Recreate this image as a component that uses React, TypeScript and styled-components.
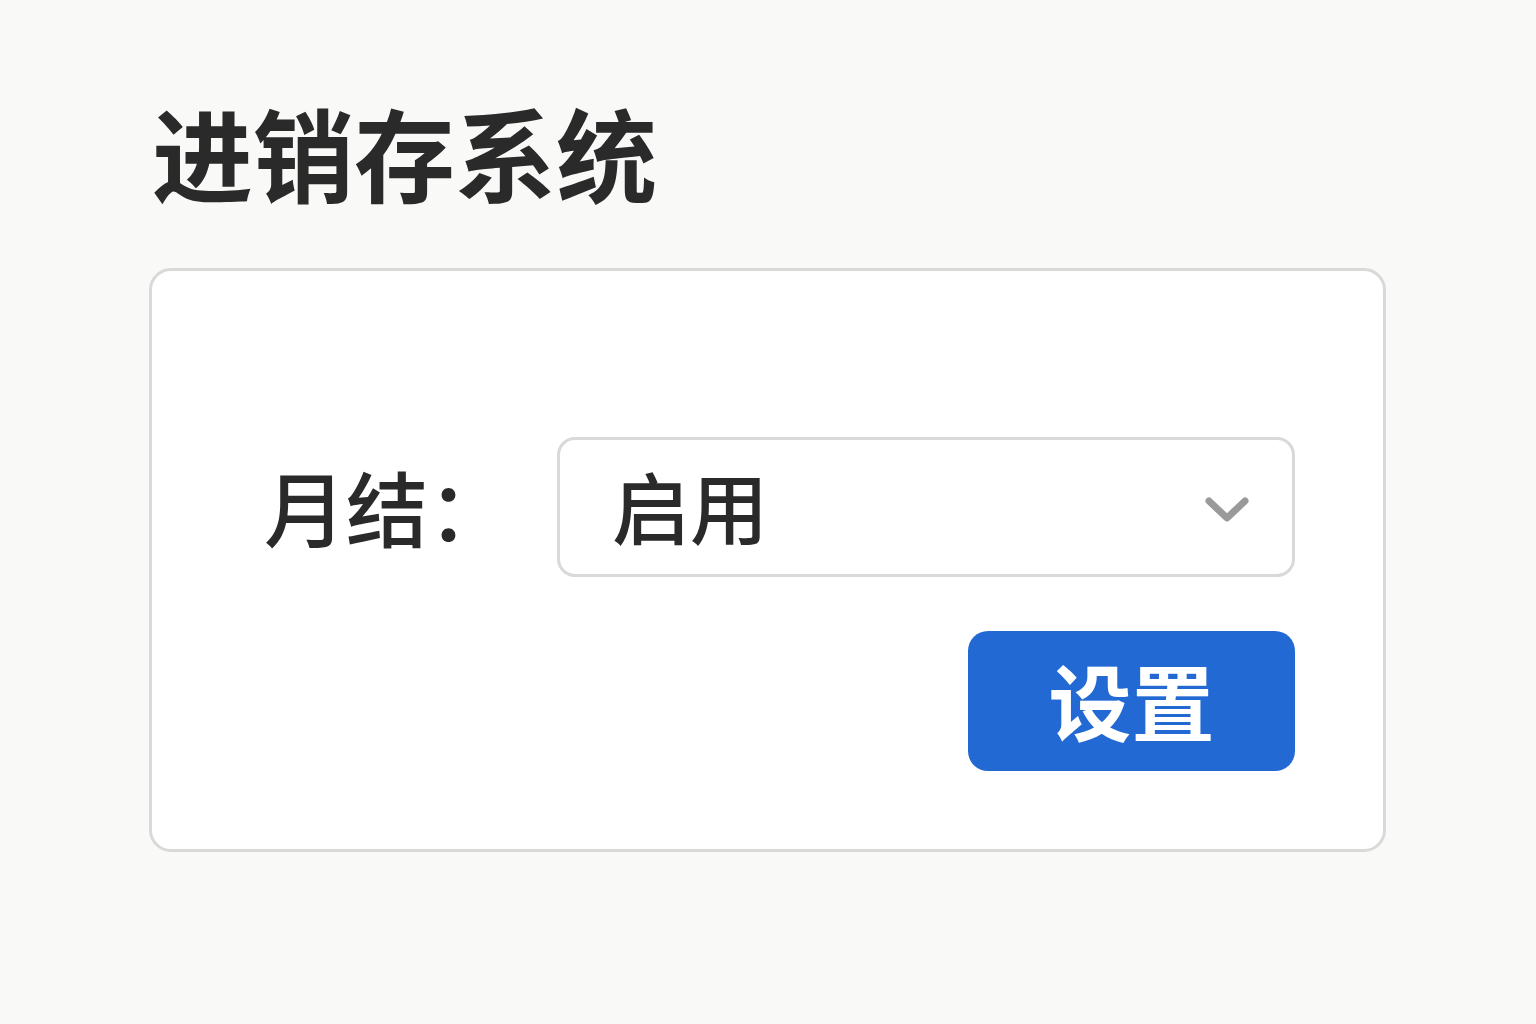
import styled, { createGlobalStyle } from "styled-components";

const GlobalStyle = createGlobalStyle`
  html, body {
    margin: 0;
    padding: 0;
    background: #f9f9f7;
  }
  body {
    font-family: "Noto Sans CJK SC", "Noto Sans", sans-serif;
    color: #2a2a2a;
  }
`;

const Page = styled.div`
  width: 1536px;
  height: 1024px;
  box-sizing: border-box;
  padding: 89px 0 0 149px;
`;

const Title = styled.h1`
  margin: 0 0 55px 3px;
  font-size: 101px;
  line-height: 124px;
  font-weight: 700;
  color: #2a2a2a;
`;

const Card = styled.div`
  width: 1237px;
  height: 584px;
  box-sizing: border-box;
  background: #ffffff;
  border: 3px solid #d9d9d9;
  border-radius: 22px;
  padding: 166px 88px 0 112px;
  display: grid;
  grid-template-columns: 293px 1fr;
  grid-template-rows: 140px auto;
  row-gap: 54px;
`;

const Label = styled.div`
  display: flex;
  align-items: center;
  font-size: 82px;
  font-weight: 500;
  color: #2a2a2a;
  padding-bottom: 4px;
`;

const Select = styled.div`
  box-sizing: border-box;
  height: 140px;
  border: 3px solid #d9d9d9;
  border-radius: 18px;
  display: flex;
  align-items: center;
  justify-content: space-between;
  padding: 0 42px 0 52px;
  font-size: 78px;
  font-weight: 500;
  color: #2a2a2a;
`;

const SelectText = styled.span`
  line-height: 1;
  padding-bottom: 4px;
`;

const Actions = styled.div`
  grid-column: 2;
  display: flex;
  justify-content: flex-end;
`;

const Button = styled.button`
  width: 327px;
  height: 140px;
  border: none;
  border-radius: 20px;
  background: #2369d3;
  color: #ffffff;
  font-family: inherit;
  font-size: 83px;
  font-weight: 700;
  line-height: 1;
  padding: 0 0 4px;
  cursor: pointer;
`;

function Chevron() {
  return (
    <svg width="46" height="36" viewBox="0 0 46 36" fill="none">
      <path
        d="M5 12 L23 29 L41 12"
        stroke="#9a9a9a"
        strokeWidth="7"
        strokeLinecap="round"
        strokeLinejoin="round"
      />
    </svg>
  );
}

export default function App() {
  return (
    <>
      <GlobalStyle />
      <Page>
        <Title>进销存系统</Title>
        <Card>
          <Label>月结：</Label>
          <Select>
            <SelectText>启用</SelectText>
            <Chevron />
          </Select>
          <Actions>
            <Button type="button">设置</Button>
          </Actions>
        </Card>
      </Page>
    </>
  );
}
